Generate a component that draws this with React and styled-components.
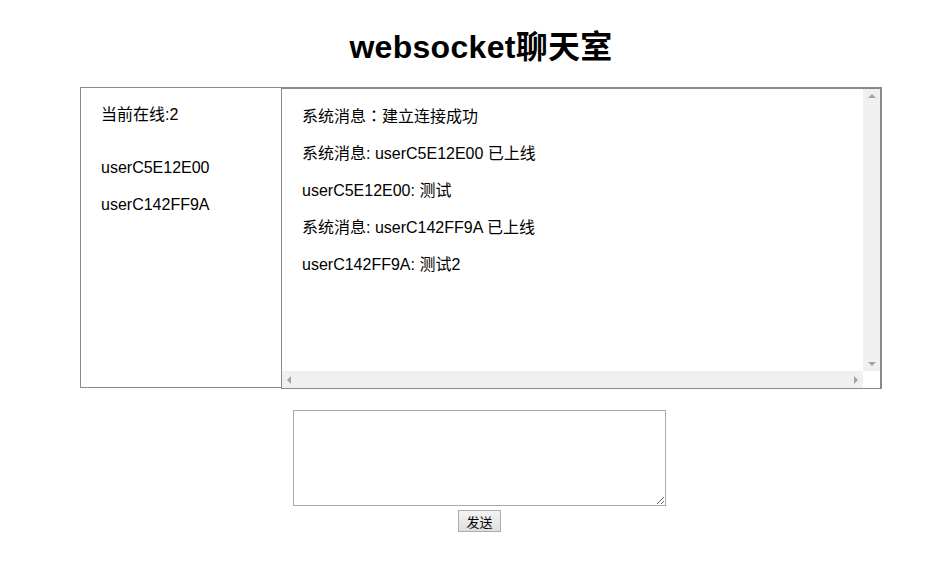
import React from 'react';
import styled, { createGlobalStyle, css } from 'styled-components';

const GlobalStyle = createGlobalStyle`
  body {
    margin: 8px;
    background: #fff;
    color: #000;
    font-family: "Liberation Sans", Arial, "Noto Sans CJK SC", sans-serif;
  }
`;

const Page = styled.div`
  padding-left: 22px;
  display: flex;
  flex-direction: column;
  align-items: center;
`;

const Title = styled.h1`
  margin: 21px 0 21px;
  font-size: 32px;
  line-height: 37px;
  font-weight: bold;
  letter-spacing: 0.3px;
`;

const ChatBox = styled.div`
  display: flex;
  width: 802px;
  height: 302px;
`;

const OnlinePanel = styled.div`
  width: 201px;
  height: 301px;
  border: 1px solid #8a8a8a;
  border-right: none;
  padding: 0 20px;
  box-sizing: border-box;
`;

const Line = styled.p`
  margin: 16px 0;
  font-size: 16px;
  line-height: 21px;
  white-space: nowrap;
`;

// full-width colon drawn centred, as in the reference font
const Punct = styled.span`
  font-family: "Noto Sans CJK TC", sans-serif;
`;

const UserList = styled.div`
  margin-top: 32px;
`;

const MessagePanel = styled.div`
  flex: 1;
  display: grid;
  grid-template-columns: 1fr 17px;
  grid-template-rows: 1fr 17px;
  border: 1px solid #8a8a8a;
  border-top-width: 2px;
  border-right-width: 2px;
  box-sizing: border-box;
`;

const Messages = styled.div`
  padding: 0 20px;
  overflow: hidden;
`;

const Track = styled.div`
  background: #f0f0f0;
  display: flex;
  flex-direction: ${p => (p.$vertical ? 'column' : 'row')};
  justify-content: space-between;
  align-items: center;
  padding: ${p => (p.$vertical ? '5px 0' : '0 5px')};
`;

const Corner = styled.div`
  background: #fff;
`;

const arrows = {
  up: css`border-left: 4px solid transparent; border-right: 4px solid transparent; border-bottom: 4px solid #a3a3a3;`,
  down: css`border-left: 4px solid transparent; border-right: 4px solid transparent; border-top: 4px solid #a3a3a3;`,
  left: css`border-top: 4px solid transparent; border-bottom: 4px solid transparent; border-right: 4px solid #a3a3a3;`,
  right: css`border-top: 4px solid transparent; border-bottom: 4px solid transparent; border-left: 4px solid #a3a3a3;`,
};

const Arrow = styled.span`
  width: 0;
  height: 0;
  ${p => arrows[p.$dir]}
`;

const Composer = styled.div`
  margin-top: 21px;
  margin-right: 3px;
  display: flex;
  flex-direction: column;
  align-items: center;
  gap: 4px;
`;

const Input = styled.textarea`
  width: 373px;
  height: 96px;
  box-sizing: border-box;
  border: 1px solid #a9a9a9;
  padding: 2px;
  font-family: inherit;
  margin: 0;
`;

const SendButton = styled.button`
  width: 43px;
  height: 22px;
  padding: 0;
  font-size: 13px;
  font-family: "Noto Sans CJK SC", sans-serif;
  border: 1px solid #adadad;
  background: linear-gradient(#f4f4f4, #dedede);
  color: #000;
`;

const users = ['userC5E12E00', 'userC142FF9A'];

const messages = [
  <>系统消息<Punct>：</Punct>建立连接成功</>,
  '系统消息: userC5E12E00 已上线',
  'userC5E12E00: 测试',
  '系统消息: userC142FF9A 已上线',
  'userC142FF9A: 测试2',
];

export default function App() {
  return (
    <>
      <GlobalStyle />
      <Page>
        <Title>websocket聊天室</Title>
        <ChatBox>
          <OnlinePanel>
            <Line>当前在线:{users.length}</Line>
            <UserList>
              {users.map(u => (
                <Line key={u}>{u}</Line>
              ))}
            </UserList>
          </OnlinePanel>
          <MessagePanel>
            <Messages>
              {messages.map((m, i) => (
                <Line key={i}>{m}</Line>
              ))}
            </Messages>
            <Track $vertical>
              <Arrow $dir="up" />
              <Arrow $dir="down" />
            </Track>
            <Track>
              <Arrow $dir="left" />
              <Arrow $dir="right" />
            </Track>
            <Corner />
          </MessagePanel>
        </ChatBox>
        <Composer>
          <Input />
          <SendButton>发送</SendButton>
        </Composer>
      </Page>
    </>
  );
}
